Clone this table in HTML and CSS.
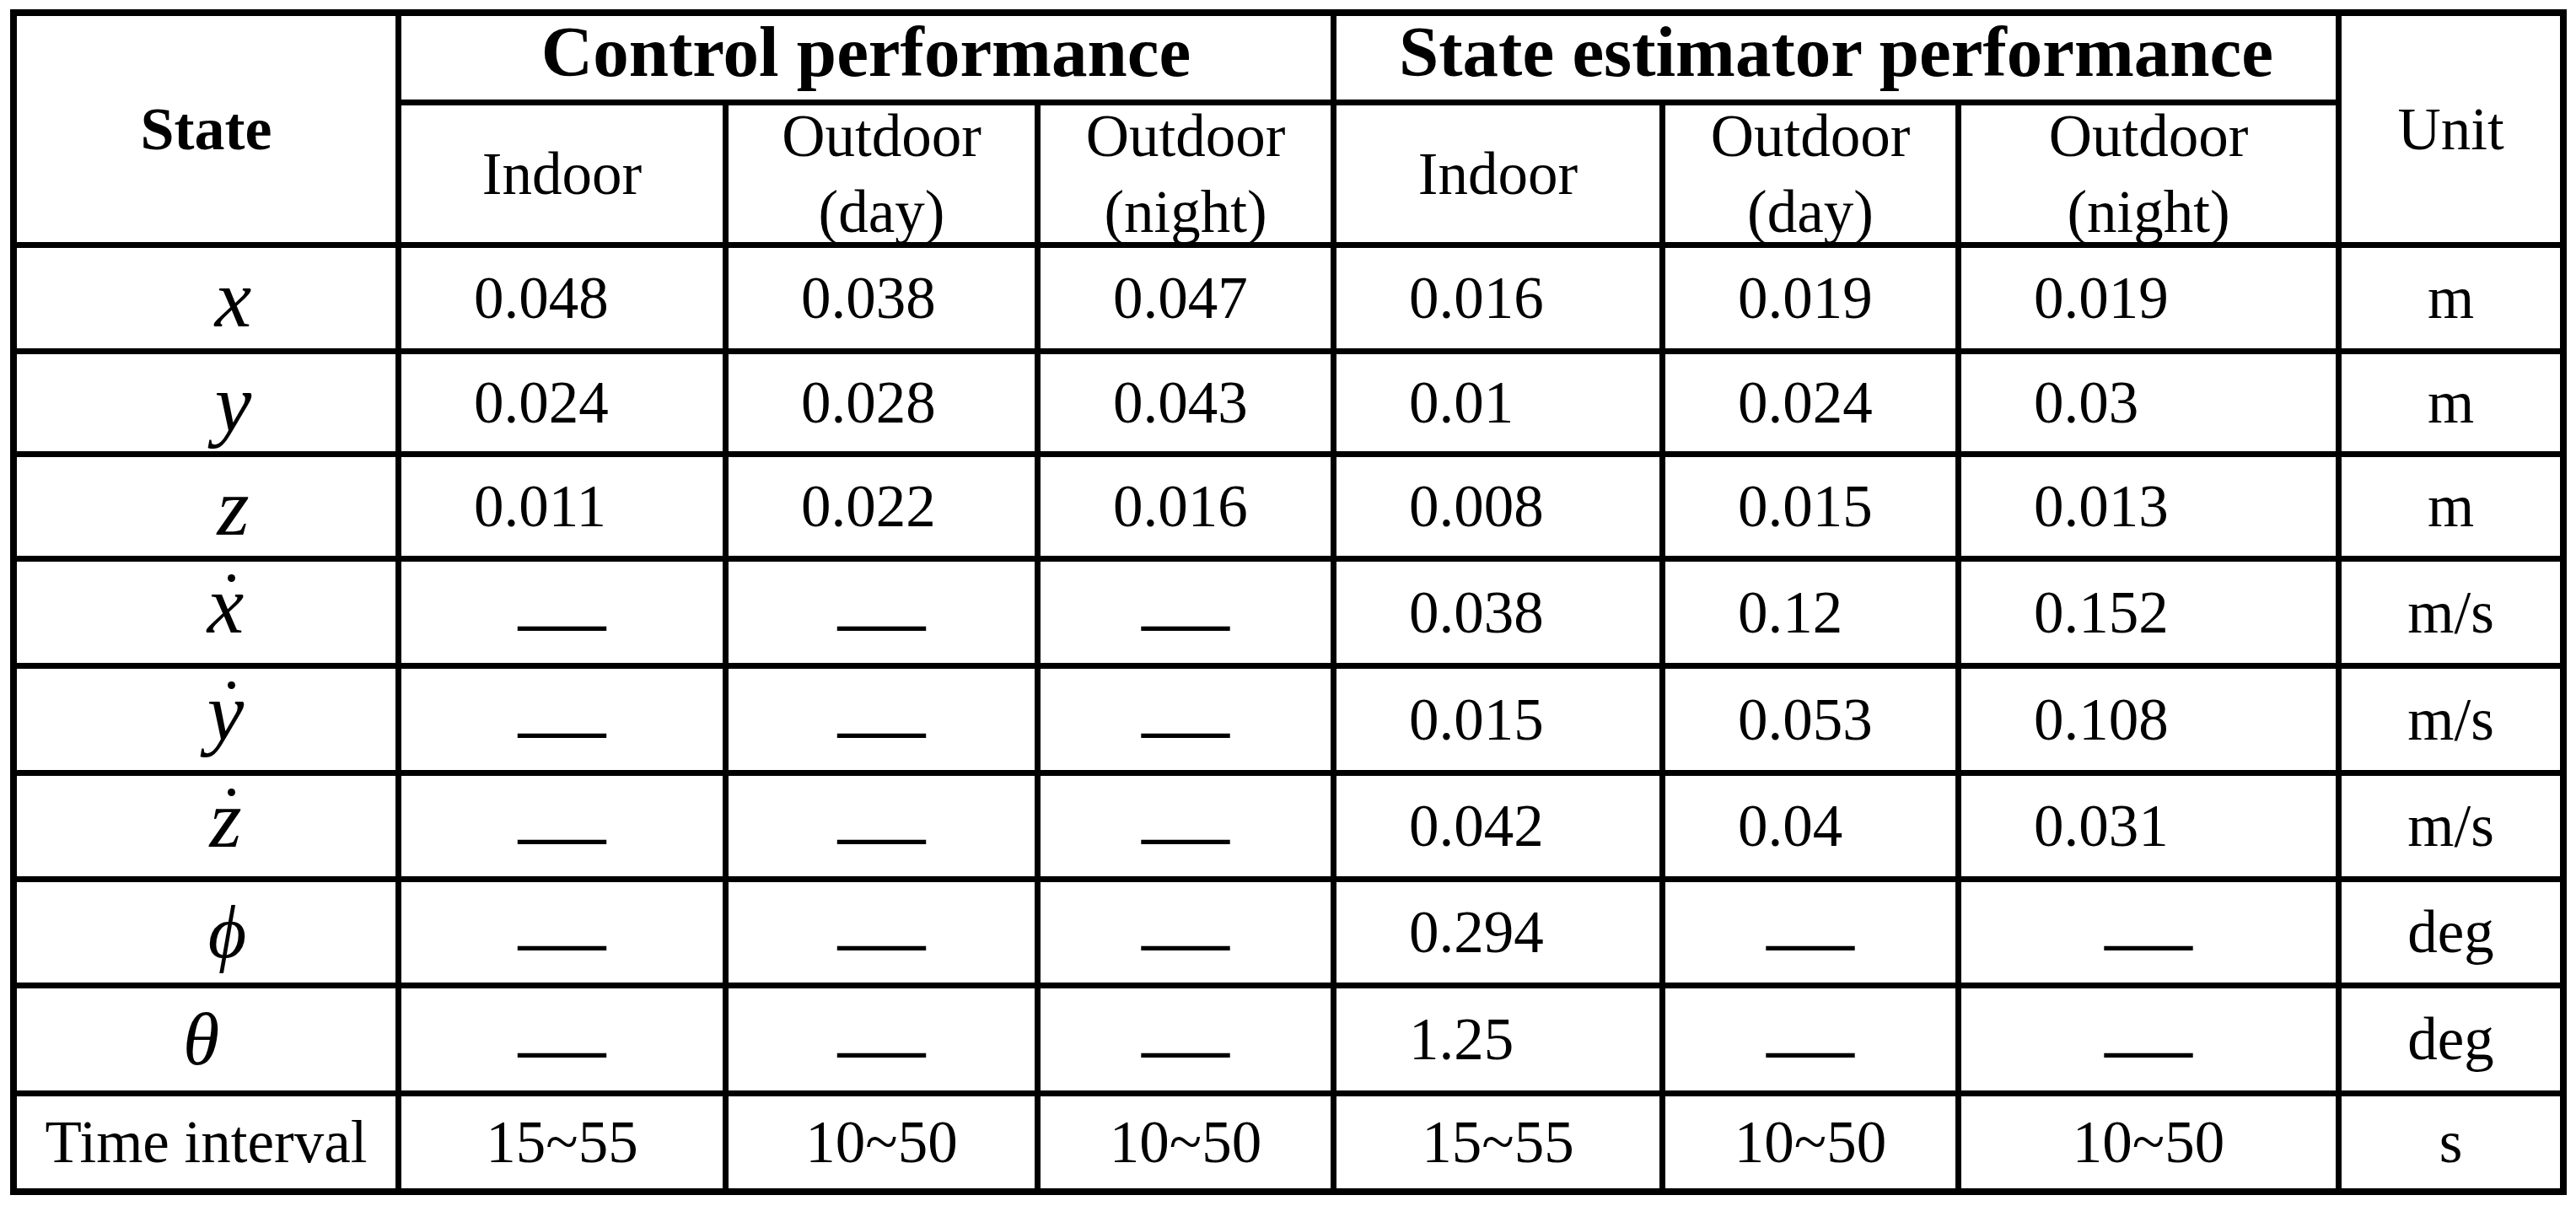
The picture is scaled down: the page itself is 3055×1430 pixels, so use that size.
FILE: index.html
```html
<!DOCTYPE html>
<html lang="en">
<head>
<meta charset="utf-8">
<title>Performance table</title>
<link rel="stylesheet" href="styles.css">
</head>
<body>
<div class="table">
  <div class="cell head-state">State</div>
  <div class="cell group span3">Control performance</div>
  <div class="cell group span3">State estimator performance</div>
  <div class="cell head-unit last-col">Unit</div>

  <div class="cell">Indoor</div>
  <div class="cell two-line">Outdoor<br>(day)</div>
  <div class="cell two-line">Outdoor<br>(night)</div>
  <div class="cell">Indoor</div>
  <div class="cell two-line">Outdoor<br>(day)</div>
  <div class="cell two-line">Outdoor<br>(night)</div>

  <div class="cell sym"><span class="var">x</span></div>
  <div class="cell num">0.048</div>
  <div class="cell num">0.038</div>
  <div class="cell num">0.047</div>
  <div class="cell num">0.016</div>
  <div class="cell num">0.019</div>
  <div class="cell num">0.019</div>
  <div class="cell last-col">m</div>

  <div class="cell sym"><span class="var">y</span></div>
  <div class="cell num">0.024</div>
  <div class="cell num">0.028</div>
  <div class="cell num">0.043</div>
  <div class="cell num">0.01</div>
  <div class="cell num">0.024</div>
  <div class="cell num">0.03</div>
  <div class="cell last-col">m</div>

  <div class="cell sym"><span class="var">z</span></div>
  <div class="cell num">0.011</div>
  <div class="cell num">0.022</div>
  <div class="cell num">0.016</div>
  <div class="cell num">0.008</div>
  <div class="cell num">0.015</div>
  <div class="cell num">0.013</div>
  <div class="cell last-col">m</div>

  <div class="cell sym dotted"><span class="var dot">x</span></div>
  <div class="cell dash">—</div>
  <div class="cell dash">—</div>
  <div class="cell dash">—</div>
  <div class="cell num">0.038</div>
  <div class="cell num">0.12</div>
  <div class="cell num">0.152</div>
  <div class="cell last-col">m/s</div>

  <div class="cell sym dotted"><span class="var dot">y</span></div>
  <div class="cell dash">—</div>
  <div class="cell dash">—</div>
  <div class="cell dash">—</div>
  <div class="cell num">0.015</div>
  <div class="cell num">0.053</div>
  <div class="cell num">0.108</div>
  <div class="cell last-col">m/s</div>

  <div class="cell sym dotted"><span class="var dot">z</span></div>
  <div class="cell dash">—</div>
  <div class="cell dash">—</div>
  <div class="cell dash">—</div>
  <div class="cell num">0.042</div>
  <div class="cell num">0.04</div>
  <div class="cell num">0.031</div>
  <div class="cell last-col">m/s</div>

  <div class="cell sym greek phi"><span class="var">ϕ</span></div>
  <div class="cell dash">—</div>
  <div class="cell dash">—</div>
  <div class="cell dash">—</div>
  <div class="cell num">0.294</div>
  <div class="cell dash">—</div>
  <div class="cell dash">—</div>
  <div class="cell last-col">deg</div>

  <div class="cell sym greek theta"><span class="var">θ</span></div>
  <div class="cell dash">—</div>
  <div class="cell dash">—</div>
  <div class="cell dash">—</div>
  <div class="cell num">1.25</div>
  <div class="cell dash">—</div>
  <div class="cell dash">—</div>
  <div class="cell last-col">deg</div>

  <div class="cell last-row">Time interval</div>
  <div class="cell last-row">15~55</div>
  <div class="cell last-row">10~50</div>
  <div class="cell last-row">10~50</div>
  <div class="cell last-row">15~55</div>
  <div class="cell last-row">10~50</div>
  <div class="cell last-row">10~50</div>
  <div class="cell last-row last-col">s</div>
</div>
</body>
</html>
```

FILE: styles.css
```css
html, body {
  margin: 0;
  padding: 0;
  background: #ffffff;
}

.table {
  display: grid;
  grid-template-columns: 456px 388px 370px 351px 390px 351px 451px 267px;
  grid-template-rows: 106px 169px 126px 122px 124px 127px 127px 126px 126px 128px 117px;
  width: max-content;
  margin: 11px 0 0 12px;
  border-top: 8px solid #000;
  border-left: 8px solid #000;
  font-family: "Liberation Serif", "Times New Roman", serif;
  font-size: 71px;
  color: #000;
}

.cell {
  box-sizing: border-box;
  border-right: 7px solid #000;
  border-bottom: 7px solid #000;
  display: flex;
  align-items: center;
  justify-content: center;
  min-width: 0;
  min-height: 0;
  white-space: nowrap;
  line-height: normal;
}

.last-col {
  border-right-width: 8px;
}

.last-row {
  border-bottom-width: 8px;
}

.head-state {
  grid-row: span 2;
  font-weight: bold;
  font-size: 72px;
}

.head-unit {
  grid-row: span 2;
}

.group {
  font-weight: bold;
  font-size: 85px;
  line-height: 85px;
  align-items: flex-start;
}

.span3 {
  grid-column: span 3;
}

.two-line {
  line-height: 90px;
  text-align: center;
}

.num {
  justify-content: flex-start;
  padding-left: 86px;
}

.dash {
  font-size: 104px;
  padding-top: 16px;
}

.sym {
  font-style: italic;
  font-size: 98px;
  padding-left: 64px;
}

.sym.dotted {
  padding-left: 46px;
  padding-bottom: 18px;
}

.sym.greek {
  font-size: 88px;
}

.sym.phi {
  padding-left: 50px;
}

.sym.theta {
  padding-left: 0;
  padding-right: 12px;
}

.var {
  display: inline-block;
  position: relative;
}

.dot::after {
  content: "";
  position: absolute;
  width: 9px;
  height: 9px;
  border-radius: 50%;
  background: #000;
  left: 56%;
  top: 20px;
}
```
